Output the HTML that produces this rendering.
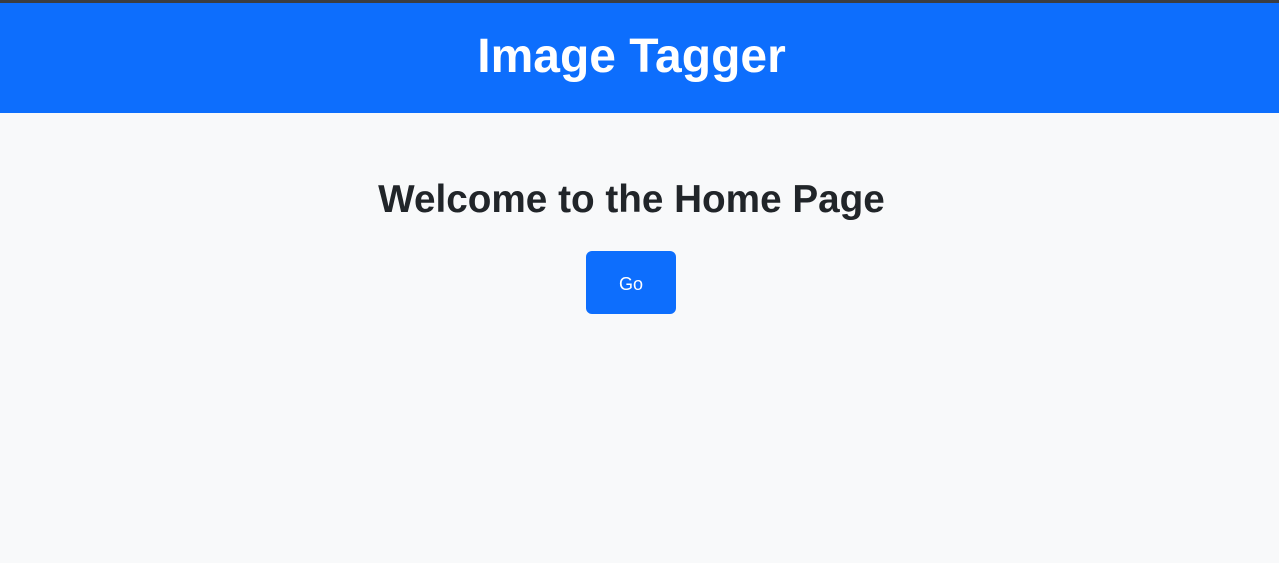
<!DOCTYPE html>
<html><head><style>
body{margin:0;background:#f8f9fa;font-family:"Liberation Sans",sans-serif;width:1279px;height:563px;overflow:hidden}
.top{height:3px;background:#3a3d42}
header{height:110px;background:#0d6efd;color:#fff}
header h1{margin:0;width:1263px;text-align:center;font-size:48px;line-height:108px;font-weight:bold}
h2{margin:0;position:absolute;top:176px;left:0;width:1263px;text-align:center;font-size:38.7px;font-weight:bold;color:#212529;line-height:48px}
.btn{position:absolute;left:586px;top:251px;width:90px;height:63px;background:#0d6efd;border-radius:6px;color:#fff;font-size:18px;line-height:66px;text-align:center}
</style></head><body>
<div class="top"></div>
<header><h1>Image Tagger</h1></header>
<h2>Welcome to the Home Page</h2>
<div class="btn">Go</div>
</body></html>
